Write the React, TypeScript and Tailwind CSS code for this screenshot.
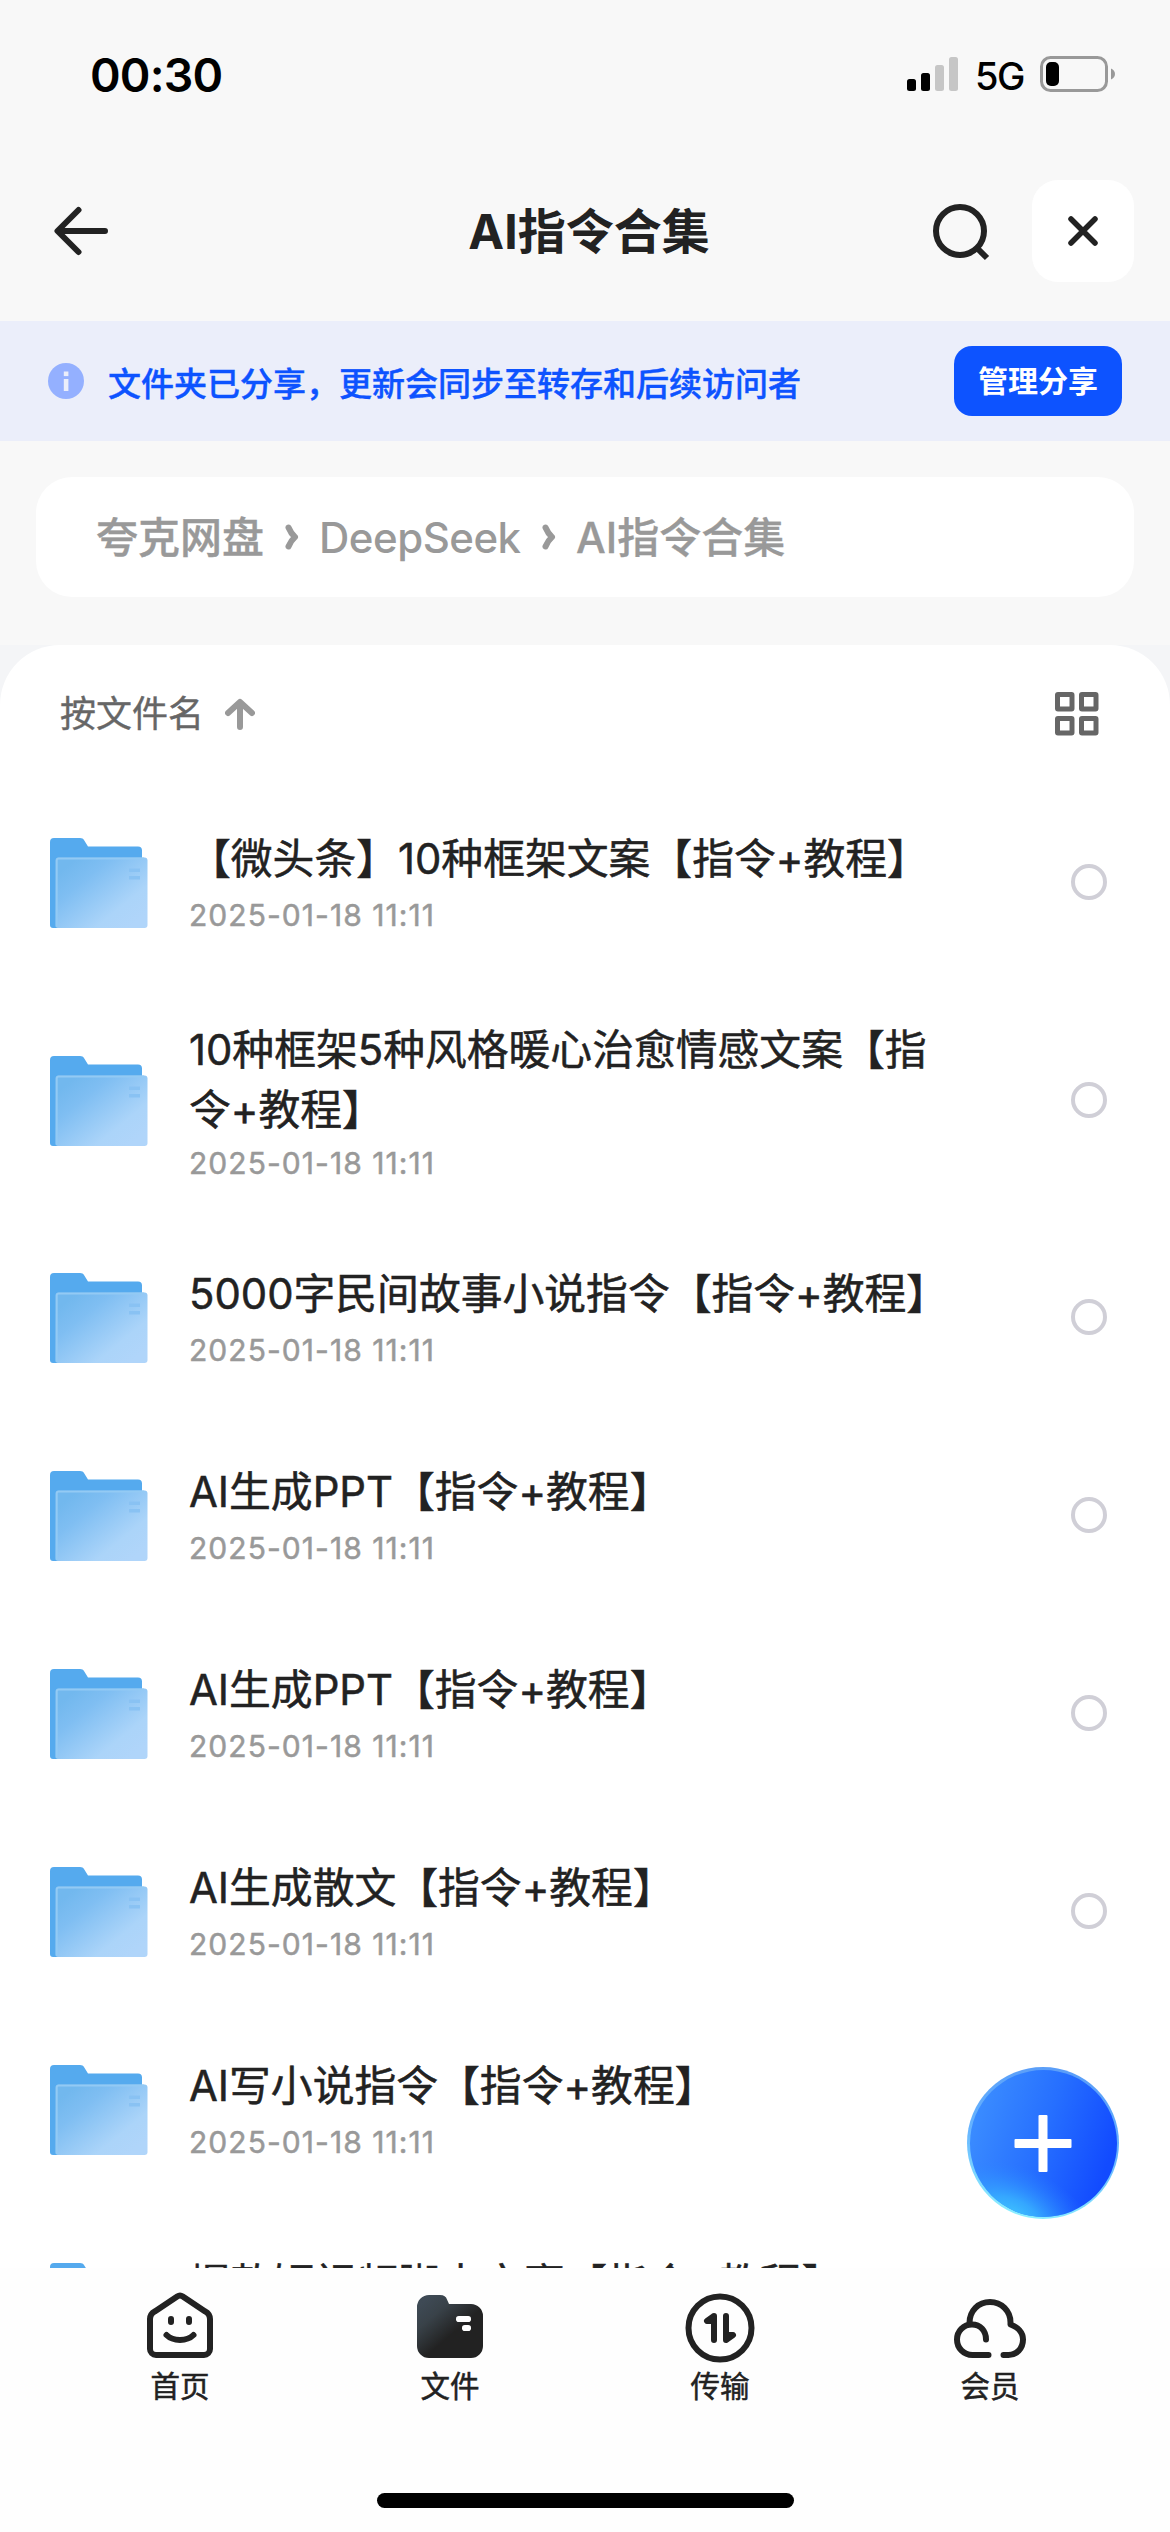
import type { ReactNode } from "react";

interface FolderItem {
  id: number;
  name: string;
  modified: string;
  wrapped?: boolean;
}

const folders: FolderItem[] = [
  { id: 1, name: "【微头条】10种框架文案【指令+教程】", modified: "2025-01-18 11:11" },
  { id: 2, name: "10种框架5种风格暖心治愈情感文案【指令+教程】", modified: "2025-01-18 11:11", wrapped: true },
  { id: 3, name: "5000字民间故事小说指令【指令+教程】", modified: "2025-01-18 11:11" },
  { id: 4, name: "AI生成PPT【指令+教程】", modified: "2025-01-18 11:11" },
  { id: 5, name: "AI生成PPT【指令+教程】", modified: "2025-01-18 11:11" },
  { id: 6, name: "AI生成散文【指令+教程】", modified: "2025-01-18 11:11" },
  { id: 7, name: "AI写小说指令【指令+教程】", modified: "2025-01-18 11:11" },
  { id: 8, name: "爆款短视频脚本文案【指令+教程】", modified: "2025-01-18 11:11" },
];

function StatusBar() {
  return (
    <div className="flex h-[148px] items-start justify-between pt-[45px] pr-[54px] pl-[90px]">
      <span className="text-[46.500px] leading-[60px] font-semibold tracking-[-0.8px] text-black">00:30</span>
      <div className="flex h-[58px] items-center">
        <svg width="51" height="34" viewBox="0 0 51 34">
          <rect x="0" y="22" width="9" height="12" rx="2.5" fill="#000" />
          <rect x="14" y="16" width="9" height="18" rx="2.5" fill="#000" />
          <rect x="28" y="8" width="9" height="26" rx="2.5" fill="#c6c6c6" />
          <rect x="42" y="0" width="9" height="34" rx="2.5" fill="#c6c6c6" />
        </svg>
        <span className="ml-[17px] w-[50px] pt-[4px] text-[38px] leading-[54px] font-medium tracking-[-1.5px] text-black">5G</span>
        <svg className="ml-[15px]" width="76" height="36" viewBox="0 0 76 36">
          <rect x="1.5" y="1.5" width="65" height="33" rx="9" fill="none" stroke="#999" strokeWidth="3" />
          <rect x="6" y="6" width="13" height="24" rx="5" fill="#000" />
          <path d="M71 12.500c2.500 1 4 3 4 5.500s-1.500 4.500-4 5.500z" fill="#999" />
        </svg>
      </div>
    </div>
  );
}

function TitleBar() {
  return (
    <header className="flex h-[173px] items-start pr-[36px] pl-[54px]">
      <button type="button" className="flex h-[166px] flex-1 items-center" aria-label="返回">
        <svg width="54" height="50" viewBox="0 0 54 50" fill="none" stroke="#222" strokeWidth="6" strokeLinecap="round" strokeLinejoin="round">
          <path d="M24.500 4 3.500 25l21 21M4 25h47" />
        </svg>
      </button>
      <h1 className="mr-[10px] text-[48px] leading-[168px] font-bold text-[#222]">AI指令合集</h1>
      <div className="flex h-[166px] flex-1 items-center justify-end">
        <button type="button" aria-label="搜索">
          <svg width="60" height="60" viewBox="0 0 60 60" fill="none" stroke="#222" strokeWidth="6">
            <circle cx="30" cy="30" r="24" />
            <path d="m47 47 10 10" />
          </svg>
        </button>
        <button type="button" className="ml-[42px] flex size-[102px] items-center justify-center rounded-[26px] bg-white" aria-label="关闭">
          <svg width="32" height="32" viewBox="0 0 32 32" stroke="#222" strokeWidth="5.500" strokeLinecap="round">
            <path d="m4 4 24 24M28 4 4 28" />
          </svg>
        </button>
      </div>
    </header>
  );
}

function ShareBanner() {
  return (
    <div className="flex h-[120px] items-center bg-[#ebeefa] pr-[48px] pl-[48px]">
      <svg width="36" height="36" viewBox="0 0 36 36">
        <circle cx="18" cy="18" r="18" fill="#94b0ff" />
        <rect x="15.800" y="8.500" width="4.600" height="4.600" fill="#ebeefa" />
        <rect x="15.800" y="16" width="4.600" height="12" fill="#ebeefa" />
      </svg>
      <p className="ml-[24px] flex-1 pt-[5px] text-[33px] leading-[50px] font-medium text-[#0d53ff] [-webkit-text-stroke:0.4px_#0d53ff]">
        文件夹已分享，更新会同步至转存和后续访问者
      </p>
      <button type="button" className="flex h-[70px] w-[168px] items-center justify-center rounded-[18px] bg-[#0d53ff] text-[30px] font-bold text-white">
        管理分享
      </button>
    </div>
  );
}

function Chevron() {
  return (
    <svg width="14" height="26" viewBox="0 0 14 26" fill="none" stroke="#999" strokeWidth="6" strokeLinecap="round" strokeLinejoin="round">
      <path d="M3.500 3.500Q6 9.500 10 13 6 16.500 3.500 22.500" />
    </svg>
  );
}

function Breadcrumb() {
  return (
    <nav className="mx-[36px] mt-[36px] flex h-[120px] items-center rounded-[36px] bg-white pl-[60px] text-[42px] font-medium text-[#999]">
      <span className="[-webkit-text-stroke:0.4px_#999]">夸克网盘</span>
      <span className="mr-[20px] ml-[21px]"><Chevron /></span>
      <span className="w-[203px] tracking-[-0.5px]">DeepSeek</span>
      <span className="mr-[20px] ml-[20px]"><Chevron /></span>
      <span className="[-webkit-text-stroke:0.3px_#999]">AI指令合集</span>
    </nav>
  );
}

function SortBar() {
  return (
    <div className="flex h-[138px] items-center justify-between pr-[70px] pl-[60px]">
      <div className="flex items-center">
        <span className="text-[36px] text-[#666] [-webkit-text-stroke:0.4px_#666]">按文件名</span>
        <svg className="ml-[21px]" width="30" height="32" viewBox="0 0 30 32" fill="none" stroke="#999" strokeWidth="6">
          <path d="M3 15 15 4l12 11M15 5v24" strokeLinecap="round" strokeLinejoin="round" />
        </svg>
      </div>
      <svg width="46" height="46" viewBox="0 0 46 46" fill="none" stroke="#666" strokeWidth="5">
        <rect x="3.500" y="3.500" width="14.500" height="14.500" rx="0.500" />
        <rect x="27.500" y="3.500" width="14.500" height="14.500" rx="0.500" />
        <rect x="3.500" y="27.500" width="14.500" height="14.500" rx="0.500" />
        <rect x="27.500" y="27.500" width="14.500" height="14.500" rx="0.500" />
      </svg>
    </div>
  );
}

function FolderIcon() {
  return (
    <svg className="mt-[2px] shrink-0" width="98" height="90" viewBox="0 0 98 90">
      <defs>
        <linearGradient id="folderFront" x1="0.1" y1="0.15" x2="0.9" y2="0.9">
          <stop offset="0" stopColor="#72b8ee" />
          <stop offset="0.250" stopColor="#7fbef2" />
          <stop offset="0.750" stopColor="#abd4f9" />
          <stop offset="1" stopColor="#b0d5fa" />
        </linearGradient>
      </defs>
      <path d="M0 4a4 4 0 0 1 4-4h26c2 0 3.300.800 4.300 2.400L38 8.500h50a4 4 0 0 1 4 4V80L6 90H3a3 3 0 0 1-3-3z" fill="#55aaee" />
      <rect x="5.500" y="19.500" width="92" height="70.500" rx="3" fill="url(#folderFront)" />
      <path d="M6.700 89V22.500a2 2 0 0 1 2-2H94" fill="none" stroke="#93caf4" strokeWidth="2" />
      <rect x="79" y="30.500" width="11" height="3.500" fill="#89c2f3" />
      <rect x="79" y="38" width="11" height="3.500" fill="#89c2f3" />
    </svg>
  );
}

function FolderRow({ item }: { item: FolderItem }) {
  return (
    <li className={`flex shrink-0 items-center pr-[63px] pl-[50px] ${item.wrapped ? "h-[237px]" : "h-[198px]"}`}>
      <FolderIcon />
      <div className={`ml-[41px] w-[765px] self-start ${item.wrapped ? "pt-[39px]" : "pt-[46px]"}`}>
        <p className="text-[41.800px] leading-[60px] text-[#222] [-webkit-text-stroke:0.5px_#222]">{item.name}</p>
        <p className={`text-[30px] leading-[40px] tracking-[1.050px] text-[#999] [-webkit-text-stroke:0.5px_#999] ${item.wrapped ? "mt-[3px]" : "mt-[6px]"}`}>
          {item.modified}
        </p>
      </div>
      <span className="ml-auto size-[36px] rounded-full border-4 border-[#d0cfd7]" />
    </li>
  );
}

function AddButton() {
  return (
    <button type="button" className="absolute top-[2067px] left-[967px] size-[152px]" aria-label="新建">
      <svg width="152" height="152" viewBox="0 0 152 152">
        <defs>
          <linearGradient id="fabBase" x1="0.05" y1="0.3" x2="0.95" y2="0.6">
            <stop offset="0" stopColor="#3a8bff" />
            <stop offset="0.500" stopColor="#266fff" />
            <stop offset="1" stopColor="#124bff" />
          </linearGradient>
          <radialGradient id="fabGlow" cx="0" cy="0" r="1" gradientUnits="userSpaceOnUse" gradientTransform="translate(44 150) rotate(22) scale(88 52)">
            <stop offset="0" stopColor="#40c8ff" />
            <stop offset="0.350" stopColor="#38b4ff" stopOpacity="0.800" />
            <stop offset="1" stopColor="#2a80ff" stopOpacity="0" />
          </radialGradient>
          <linearGradient id="fabRim" x1="0.6" y1="0" x2="0.4" y2="1">
            <stop offset="0" stopColor="#5a9df8" />
            <stop offset="0.500" stopColor="#66b4ff" />
            <stop offset="1" stopColor="#8cf0ff" />
          </linearGradient>
        </defs>
        <circle cx="76" cy="76" r="76" fill="url(#fabRim)" />
        <circle cx="76.500" cy="76.500" r="73.500" fill="url(#fabBase)" />
        <circle cx="76.500" cy="76.500" r="73.500" fill="url(#fabGlow)" />
        <rect x="71.500" y="48" width="9" height="57" rx="1" fill="#fff" />
        <rect x="47.500" y="72" width="57" height="9" rx="1" fill="#fff" />
      </svg>
    </button>
  );
}

function HomeIcon() {
  return (
    <svg width="72" height="72" viewBox="0 0 72 72" fill="none" stroke="#222" strokeWidth="6" strokeLinecap="round" strokeLinejoin="round">
      <path d="M33.200 4.400 10.800 19.400A9 9 0 0 0 6 27v30a6 6 0 0 0 6 6h48a6 6 0 0 0 6-6V27a9 9 0 0 0-4.800-7.600L38.800 4.400a5 5 0 0 0-5.600 0z" />
      <path d="M27 27v3M45 27v3" />
      <path d="M22.500 43c6.500 6.500 20.500 6.500 27 0" />
    </svg>
  );
}

function FilesIcon() {
  return (
    <svg width="72" height="72" viewBox="0 0 72 72">
      <defs>
        <linearGradient id="filesFill" x1="0.1" y1="0.1" x2="0.55" y2="0.6">
          <stop offset="0" stopColor="#3e4a55" />
          <stop offset="0.400" stopColor="#394249" />
          <stop offset="1" stopColor="#222" />
        </linearGradient>
      </defs>
      <path d="M3 15A12 12 0 0 1 15 3h11c4 0 6 1.500 7 4.500L35 12h22a12 12 0 0 1 12 12v30a12 12 0 0 1-12 12H15A12 12 0 0 1 3 54z" fill="url(#filesFill)" />
      <rect x="42" y="24" width="15" height="6" rx="2.800" fill="#fff" />
      <rect x="48" y="33" width="9" height="6" rx="2.800" fill="#fff" />
    </svg>
  );
}

function TransferIcon() {
  return (
    <svg width="72" height="72" viewBox="0 0 72 72" fill="none" stroke="#222" strokeWidth="6" strokeLinecap="round" strokeLinejoin="round">
      <circle cx="36" cy="36" r="31.500" />
      <path d="M30 24v24M30 24l-7 5h7zM42 24v24M42 48l7-5h-7z" />
    </svg>
  );
}

function MemberIcon() {
  return (
    <svg width="72" height="72" viewBox="0 0 72 72" fill="none" stroke="#222" strokeWidth="6" strokeLinecap="round" strokeLinejoin="round">
      <path d="M34.500 63H18.500C9.500 63 3 56 3 47.500S9.500 32.500 18 32.500 32 39 32 47.500" />
      <path d="M15.500 31C15.500 18.500 24.500 10 36 10s20.500 9 20.500 20.500V32.500C63.500 35 69 40.500 69 47.500 69 56.500 62.500 63 54.500 63H49.500" />
    </svg>
  );
}

const tabs: { label: string; icon: ReactNode }[] = [
  { label: "首页", icon: <HomeIcon /> },
  { label: "文件", icon: <FilesIcon /> },
  { label: "传输", icon: <TransferIcon /> },
  { label: "会员", icon: <MemberIcon /> },
];

export default function App() {
  return (
    <div className="relative flex h-[2532px] w-[1170px] flex-col overflow-hidden bg-[#f8f8f8] font-['Inter','Noto_Sans_CJK_SC',sans-serif]">
      <StatusBar />
      <TitleBar />
      <ShareBanner />
      <Breadcrumb />

      <main className="mt-[48px] h-[1623px] shrink-0 bg-[#f4f5f7]">
        <section className="flex h-full flex-col overflow-hidden rounded-t-[60px] bg-white">
          <SortBar />
          <ul className="flex min-h-0 flex-1 flex-col overflow-hidden">
            {folders.map((item) => (
              <FolderRow key={item.id} item={item} />
            ))}
          </ul>
        </section>
      </main>

      <footer className="flex flex-1 flex-col items-center justify-between bg-[#fefefe] pb-[24px]">
        <div className="grid w-full grid-cols-4 px-[45px] pt-[24px]">
          {tabs.map((tab) => (
            <button key={tab.label} type="button" className="flex flex-col items-center text-[#222]">
              <span className="[&>svg]:overflow-visible">{tab.icon}</span>
              <span className="mt-[2px] text-[29.500px] leading-[40px] [-webkit-text-stroke:0.5px_#222]">{tab.label}</span>
            </button>
          ))}
        </div>
        <div className="h-[15px] w-[417px] rounded-full bg-black" />
      </footer>

      <AddButton />
    </div>
  );
}
